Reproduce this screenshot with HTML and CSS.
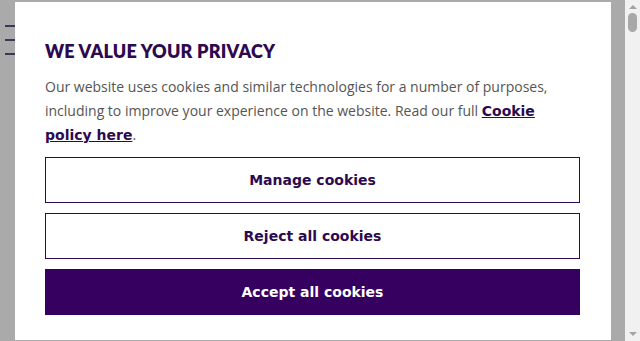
FILE: index.html
```html
<!DOCTYPE html>
<html lang="en">
<head>
<meta charset="utf-8">
<title>Cookie consent</title>
<link rel="stylesheet" href="styles.css">
</head>
<body>
<div class="viewport">
  <div class="page">
    <div class="hamburger"><span></span><span></span><span></span></div>
    <div class="modal" role="dialog" aria-labelledby="ttl">
      <h2 id="ttl" class="title">WE VALUE YOUR PRIVACY</h2>
      <p class="text">Our website uses cookies and similar technologies for a number of purposes, including to improve your experience on the website. Read our full <a href="#" class="link">Cookie policy here</a>.</p>
      <div class="actions">
        <button class="btn btn-outline">Manage cookies</button>
        <button class="btn btn-outline">Reject all cookies</button>
        <button class="btn btn-primary">Accept all cookies</button>
      </div>
    </div>
  </div>
  <div class="scrollbar">
    <div class="arrow arrow-up"></div>
    <div class="thumb"></div>
    <div class="track"></div>
    <div class="arrow arrow-down"></div>
  </div>
</div>
</body>
</html>
```
FILE: styles.css
```css
html, body {
  margin: 0;
  padding: 0;
  height: 100%;
  overflow: hidden;
}
.viewport {
  display: flex;
  width: 640px;
  height: 341px;
}
.page {
  position: relative;
  flex: 1;
  background: #aaaaaa;
}
.hamburger {
  display: flex;
  flex-direction: column;
  gap: 12px;
  padding: 25px 0 0 5px;
}
.hamburger span {
  display: block;
  width: 14px;
  height: 2px;
  background: #3c3858;
}
.modal {
  position: absolute;
  left: 15px;
  top: 2px;
  width: 596px;
  height: 338px;
  box-sizing: border-box;
  padding: 0 31px 0 30px;
  background: #ffffff;
  overflow: hidden;
}
.title {
  margin: 38px 0 0;
  font-family: "Lato", "DejaVu Sans", sans-serif;
  font-weight: 800;
  font-size: 18px;
  line-height: 22px;
  color: #2d0a50;
  letter-spacing: 0.2px;
}
.text {
  margin: 13px 0 0;
  font-family: "Open Sans", "Liberation Sans", sans-serif;
  font-size: 14px;
  line-height: 24px;
  color: #555555;
}
.link {
  font-family: "DejaVu Sans", sans-serif;
  font-weight: bold;
  line-height: 1;
  color: #2d0a50;
  text-decoration: underline;
}
.actions {
  display: flex;
  flex-direction: column;
  gap: 10px;
  margin-top: 10px;
}
.btn {
  display: block;
  width: 100%;
  height: 46px;
  margin: 0;
  padding: 0;
  font-family: "DejaVu Sans", sans-serif;
  font-weight: bold;
  font-size: 14px;
  cursor: pointer;
}
.btn-outline {
  background: #ffffff;
  color: #2d0a50;
  border: 1px solid #2d0a50;
}
.btn-primary {
  background: #35005f;
  color: #ffffff;
  border: 1px solid #35005f;
}
.scrollbar {
  width: 15px;
  display: flex;
  flex-direction: column;
  align-items: center;
  background: #f1f1f1;
}
.arrow {
  width: 0;
  height: 0;
  border-left: 4px solid transparent;
  border-right: 4px solid transparent;
}
.arrow-up {
  margin-top: 5px;
  border-bottom: 4px solid #a3a3a3;
}
.arrow-down {
  margin-bottom: 5px;
  border-top: 4px solid #a3a3a3;
}
.thumb {
  margin-top: 4px;
  width: 9px;
  height: 19px;
  border-radius: 5px;
  background: #a8a8a8;
}
.track {
  flex: 1;
}
```
